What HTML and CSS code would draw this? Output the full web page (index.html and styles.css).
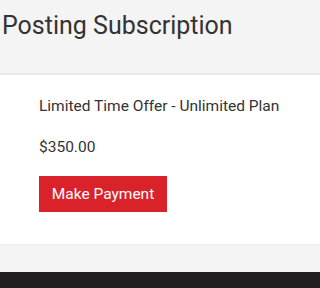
FILE: index.html
```html
<!DOCTYPE html>
<html>
<head>
<meta charset="utf-8">
<link rel="stylesheet" href="styles.css">
</head>
<body>
<header class="page-head">
  <h1 class="title">Posting Subscription</h1>
</header>
<section class="plan">
  <div class="plan-name">Limited Time Offer - Unlimited Plan</div>
  <div class="plan-price">$350.00</div>
  <button class="pay-btn">Make Payment</button>
</section>
<div class="spacer"></div>
<footer class="footer"></footer>
</body>
</html>
```
FILE: styles.css
```css
html, body {
  margin: 0;
  padding: 0;
  background: #f4f4f4;
  font-family: Roboto, "Liberation Sans", sans-serif;
  color: #333;
}
.page-head {
  height: 75px;
  border-bottom: 2px solid #e9e9e9;
  padding: 0 0 0 2px;
  box-sizing: border-box;
}
.title {
  margin: 0;
  padding-top: 11px;
  font-size: 25px;
  font-weight: 400;
  line-height: 30px;
  color: #333;
}
.plan {
  background: #fff;
  height: 170px;
  padding: 22px 0 0 39px;
  box-sizing: border-box;
  border-bottom: 1px solid #eeeeee;
}
.plan-name {
  font-size: 15.5px;
  line-height: 18px;
  color: #333;
}
.plan-price {
  margin-top: 23px;
  font-size: 15.5px;
  line-height: 18px;
  color: #333;
}
.pay-btn {
  display: block;
  margin-top: 20px;
  width: 128px;
  height: 36px;
  border: 0;
  border-radius: 0;
  background: #d9222a;
  color: #fff;
  font-family: Roboto, "Liberation Sans", sans-serif;
  font-size: 15.5px;
  padding: 0;
}
.spacer {
  height: 27px;
}
.footer {
  height: 20px;
  background: #231f20;
}
```
